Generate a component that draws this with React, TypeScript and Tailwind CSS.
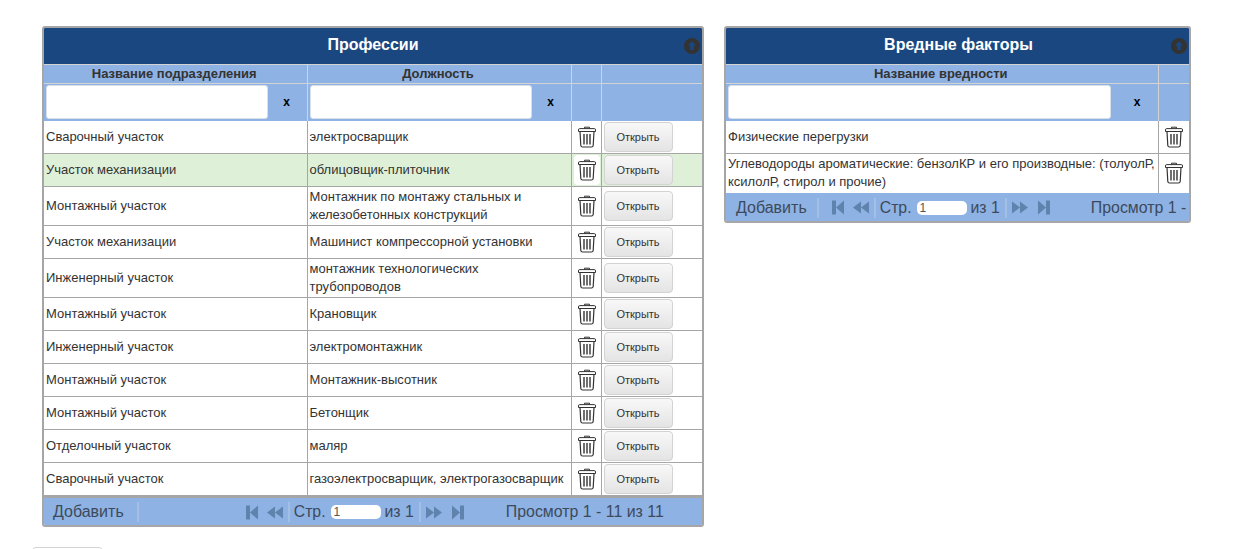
import React from 'react';

const TrashIcon = () => (
  <svg width="18" height="22" viewBox="0 0 18 22" fill="none" stroke="#333" className="block">
    <path d="M6.5 2.5 V1.2 H11.5 V2.5" strokeWidth="1" />
    <path d="M1.5 2.6 H16.5 Q17.5 2.6 17.5 4 V5.5 H0.5 V4 Q0.5 2.6 1.5 2.6 Z" strokeWidth="1" />
    <path d="M2 5.5 L2.8 19.5 Q3 21 4.5 21 H13.5 Q15 21 15.2 19.5 L16 5.5" strokeWidth="1.2" />
    <path d="M6 8 V18.5 M9 8 V18.5 M12 8 V18.5" strokeWidth="1.4" />
  </svg>
);

const CollapseIcon = () => (
  <span className="absolute right-[2px] top-[10px]">
    <svg width="16" height="16" viewBox="0 0 16 16" className="block">
      <circle cx="8" cy="8" r="8" fill="#333" />
      <path d="M8 3.2 L12 7.6 H9.8 V12 H6.2 V7.6 H4 Z" fill="#1a4780" />
    </svg>
  </span>
);

const pagerColor = '#5f83ad';

const FirstIcon = () => (
  <svg width="12" height="15" viewBox="0 0 12 15" className="block shrink-0">
    <path d="M0 0.5 H4 V14.5 H0 Z M4 7.5 L12 0.5 V14.5 Z" fill={pagerColor} />
  </svg>
);
const PrevIcon = () => (
  <svg width="16" height="15" viewBox="0 0 16 15" className="block shrink-0">
    <path d="M0 7.5 L8 1.5 V13.5 Z M8 7.5 L16 1.5 V13.5 Z" fill={pagerColor} />
  </svg>
);
const NextIcon = () => (
  <svg width="16" height="15" viewBox="0 0 16 15" className="block shrink-0">
    <path d="M0 1.5 L8 7.5 L0 13.5 Z M8 1.5 L16 7.5 L8 13.5 Z" fill={pagerColor} />
  </svg>
);
const LastIcon = () => (
  <svg width="12" height="15" viewBox="0 0 12 15" className="block shrink-0">
    <path d="M0 0.5 L8 7.5 L0 14.5 Z M8 0.5 H12 V14.5 H8 Z" fill={pagerColor} />
  </svg>
);

const Sep = () => <span className="block w-[2px] h-[20px] bg-[#a3bfe4] shrink-0" />;

const FilterCell = ({ clearClass }: { clearClass: string }) => (
  <td className="h-[37px] p-0 border-r border-[#d3d3d3] bg-[#8db2e3]">
    <div className="flex items-center pl-[2px] pr-[1px]">
      <input className="flex-1 min-w-0 h-[34px] bg-white rounded-[3px] border border-[#d8dfe8] outline-none" />
      <span className={`${clearClass} text-center text-[12px] font-bold text-black shrink-0`}>x</span>
    </div>
  </td>
);

const Pager = () => (
  <div className="flex items-center text-[15.8px]">
    <FirstIcon />
    <span className="ml-[9px]"><PrevIcon /></span>
    <span className="ml-[5px]"><Sep /></span>
    <span className="ml-[4px] whitespace-nowrap">Стр.</span>
    <input
      readOnly
      value="1"
      className="ml-[5px] w-[50px] h-[14px] rounded-[5px] bg-white text-[12px] leading-[14px] pl-[3px] text-[#555] outline-none"
    />
    <span className="ml-[4px] whitespace-nowrap">из 1</span>
    <span className="ml-[5px]"><Sep /></span>
    <span className="ml-[5px]"><NextIcon /></span>
    <span className="ml-[10px]"><LastIcon /></span>
  </div>
);

const jobs = [
  ['Сварочный участок', 'электросварщик', 33],
  ['Участок механизации', 'облицовщик-плиточник', 33],
  ['Монтажный участок', 'Монтажник по монтажу стальных и железобетонных конструкций', 39],
  ['Участок механизации', 'Машинист компрессорной установки', 33],
  ['Инженерный участок', 'монтажник технологических трубопроводов', 39],
  ['Монтажный участок', 'Крановщик', 33],
  ['Инженерный участок', 'электромонтажник', 33],
  ['Монтажный участок', 'Монтажник-высотник', 33],
  ['Монтажный участок', 'Бетонщик', 33],
  ['Отделочный участок', 'маляр', 33],
  ['Сварочный участок', 'газоэлектросварщик, электрогазосварщик', 33],
] as const;

const Professions = () => (
  <div className="w-[662px] h-[501px] shrink-0 border-2 border-[#a6a6a6] rounded-[3px] overflow-hidden bg-white">
    <div className="relative h-[36px] pb-[2px] bg-[#1a4780] flex items-center justify-center text-white text-[16px] font-bold">
      Профессии
      <CollapseIcon />
    </div>
    <table className="w-[658px] table-fixed border-collapse text-[13px] leading-[18px] text-[#333]">
      <colgroup>
        <col className="w-[263px]" />
        <col className="w-[264px]" />
        <col className="w-[30px]" />
        <col className="w-[101px]" />
      </colgroup>
      <thead>
        <tr className="h-[19px] bg-[#8db2e3] border-t border-b border-[#d3d3d3] font-bold">
          <th className="p-0 pr-[2px] border-r border-[#d3d3d3]">Название подразделения</th>
          <th className="p-0 pr-[2px] border-r border-[#d3d3d3]">Должность</th>
          <th className="p-0 border-r border-[#d3d3d3]"></th>
          <th className="p-0"></th>
        </tr>
        <tr>
          <FilterCell clearClass="w-[38px]" />
          <FilterCell clearClass="w-[38px]" />
          <td className="p-0 border-r border-[#d3d3d3] bg-[#8db2e3]"></td>
          <td className="p-0 bg-[#8db2e3]"></td>
        </tr>
      </thead>
      <tbody>
        {jobs.map((job, idx) => (
          <tr
            key={idx}
            style={{ height: job[2] }}
            className={`border-b border-[#a6a6a6] ${idx === 1 ? 'bg-[#dff0d8]' : ''}`}
          >
            <td className="p-0 pl-[2px] border-r border-[#a6a6a6]">{job[0]}</td>
            <td className="p-0 pl-[2px] pr-[4px] border-r border-[#a6a6a6]">{job[1]}</td>
            <td className="p-0 pl-[1px] border-r border-[#a6a6a6]">
              <div className={`mx-auto w-[26px] h-[30px] flex items-center justify-center rounded-[4px] ${idx === 1 ? 'bg-white' : ''}`}>
                <TrashIcon />
              </div>
            </td>
            <td className="p-0 pl-[2px]">
              <button className="block w-[69px] h-[30px] rounded-[4px] border border-[#d3d3d3] bg-gradient-to-b from-[#f8f8f8] to-[#e4e4e4] text-[11px] text-[#333]">
                Открыть
              </button>
            </td>
          </tr>
        ))}
      </tbody>
    </table>
    <div className="h-[30px] bg-[#8db2e3] flex items-center text-[16px] text-[#3d4a5c] pl-[9px] border-t-2 border-[#a6a6a6] whitespace-nowrap">
      <span>Добавить</span>
      <span className="ml-[13px]"><Sep /></span>
      <span className="ml-[107px]"><Pager /></span>
      <span className="ml-[42px] text-[15.9px]">Просмотр 1 - 11 из 11</span>
    </div>
  </div>
);

const Hazards = () => (
  <div className="w-[467px] h-[197px] shrink-0 border-2 border-[#a6a6a6] rounded-[3px] overflow-hidden bg-white">
    <div className="relative h-[36px] pb-[2px] pl-[2px] bg-[#1a4780] flex items-center justify-center text-white text-[16px] font-bold">
      Вредные факторы
      <CollapseIcon />
    </div>
    <table className="w-[463px] table-fixed border-collapse text-[13px] leading-[18px] text-[#333]">
      <colgroup>
        <col className="w-[432px]" />
        <col className="w-[31px]" />
      </colgroup>
      <thead>
        <tr className="h-[19px] bg-[#8db2e3] border-t border-b border-[#d3d3d3] font-bold">
          <th className="p-0 pr-[2px] border-r border-[#d3d3d3]">Название вредности</th>
          <th className="p-0"></th>
        </tr>
        <tr>
          <FilterCell clearClass="w-[46px] pl-[7px]" />
          <td className="p-0 bg-[#8db2e3]"></td>
        </tr>
      </thead>
      <tbody>
        <tr className="h-[33px] border-b border-[#a6a6a6]">
          <td className="p-0 pl-[2px] border-r border-[#a6a6a6]">Физические перегрузки</td>
          <td className="p-0"><div className="flex justify-center"><TrashIcon /></div></td>
        </tr>
        <tr className="h-[39px]">
          <td className="p-0 pl-[2px] border-r border-[#a6a6a6]">
            Углеводороды ароматические: бензолКР и его производные: (толуолР, ксилолР, стирол и прочие)
          </td>
          <td className="p-0"><div className="flex justify-center"><TrashIcon /></div></td>
        </tr>
      </tbody>
    </table>
    <div className="h-[30px] bg-[#8db2e3] flex items-center text-[16px] text-[#3d4a5c] pl-[10px] overflow-hidden whitespace-nowrap">
      <span>Добавить</span>
      <span className="ml-[10px]"><Sep /></span>
      <span className="ml-[13px]"><Pager /></span>
      <span className="ml-[41px] text-[15.9px]">Просмотр 1 -</span>
    </div>
  </div>
);

export default function App() {
  return (
    <div className="h-screen overflow-hidden bg-white font-['Liberation_Sans',Arial,sans-serif]">
      <div className="pt-[26px] pl-[42px] flex items-start gap-[20px]">
        <Professions />
        <Hazards />
      </div>
      <button className="block ml-[32px] mt-[20px] w-[71px] h-[30px] rounded-[4px] border border-[#d3d3d3] bg-white" />
    </div>
  );
}
